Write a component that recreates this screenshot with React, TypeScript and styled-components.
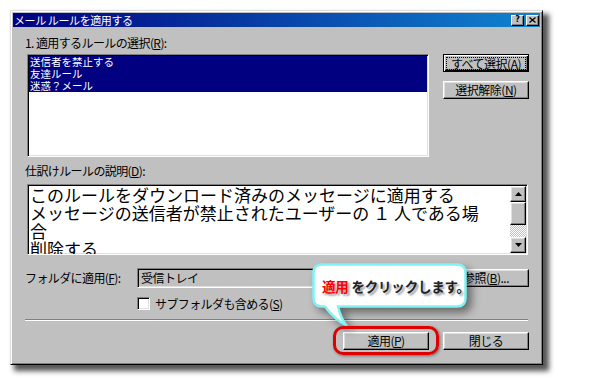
import React from "react";
import styled, { createGlobalStyle, css } from "styled-components";

const UI_FONT = `"Noto Sans CJK JP", "Noto Sans", sans-serif`;

const GlobalStyle = createGlobalStyle`
  html, body { margin: 0; padding: 0; background: #fff; }
  body { font-family: ${UI_FONT}; }
  #root { width: 600px; height: 384px; overflow: hidden; }
`;

const raised = css`
  border: 1px solid;
  border-color: #fff #000 #000 #fff;
  box-shadow: inset -1px -1px #808080, inset 1px 1px #dfdfdf;
`;

const sunken = css`
  border: 1px solid;
  border-color: #808080 #fff #fff #808080;
  box-shadow: inset 1px 1px #000, inset -1px -1px #dfdfdf;
`;

const Page = styled.div`
  width: 600px;
  height: 384px;
  padding: 10px;
  box-sizing: border-box;
  background: #fff;
`;

const Window = styled.div`
  position: relative;
  box-sizing: border-box;
  width: 533px;
  height: 355px;
  padding: 2px;
  background: #c0c0c0;
  border: 1px solid;
  border-color: #dfdfdf #000 #000 #dfdfdf;
  box-shadow: inset 1px 1px #fff, inset -1px -1px #808080,
    5px 5px 5px 1px rgba(30, 30, 30, 0.75);
  font-family: ${UI_FONT};
  color: #000;
`;

const TitleBar = styled.div`
  height: 14px;
  display: flex;
  align-items: center;
  background: linear-gradient(to right, #000080, #1084d0);
  padding: 0 1px 0 1px;
`;

const Title = styled.span`
  flex: 1;
  color: #fff;
  font-size: 11px;
  line-height: 14px;
  letter-spacing: -0.4px;
  white-space: nowrap;
`;

const CaptionButton = styled.span<{ $gap?: number }>`
  width: 13px;
  height: 11px;
  box-sizing: border-box;
  background: #c0c0c0;
  border: 1px solid;
  border-color: #fff #000 #000 #fff;
  box-shadow: inset -1px -1px #808080;
  display: flex;
  align-items: center;
  justify-content: center;
  margin-left: ${(p) => p.$gap ?? 0}px;
  font-family: "DejaVu Sans", sans-serif;
  font-size: 8px;
  font-weight: bold;
  line-height: 8px;
  color: #000;
`;

const Body = styled.div`
  padding: 9px 11px 0 12px;
  display: flex;
  flex-direction: column;
`;

const Label = styled.div<{ $top?: number }>`
  font-size: 12px;
  line-height: 14px;
  letter-spacing: -0.6px;
  white-space: nowrap;
  margin-top: ${(p) => p.$top ?? 0}px;
`;

const TopSection = styled.div`
  display: flex;
  gap: 14px;
`;

const LeftCol = styled.div`
  width: 404px;
  display: flex;
  flex-direction: column;
`;

const ListBox = styled.div`
  ${sunken};
  box-sizing: border-box;
  margin: 4px 0 0 2px;
  width: 402px;
  height: 103px;
  padding: 1px;
  background: #fff;
`;

const ListItem = styled.div<{ $selected?: boolean }>`
  height: 12px;
  font-size: 10.5px;
  line-height: 12px;
  padding-left: 1px;
  white-space: nowrap;
  background: ${(p) => (p.$selected ? "#000080" : "transparent")};
  color: ${(p) => (p.$selected ? "#fff" : "#000")};
`;

const RightCol = styled.div`
  display: flex;
  flex-direction: column;
  gap: 9px;
  padding-top: 18px;
`;

const PushButton = styled.div<{ $default?: boolean; $push?: boolean }>`
  ${raised};
  box-sizing: border-box;
  width: 86px;
  height: 18px;
  display: flex;
  align-items: center;
  justify-content: center;
  font-size: 12px;
  line-height: 14px;
  letter-spacing: -0.5px;
  white-space: nowrap;
  background: #c0c0c0;
  margin-left: ${(p) => (p.$push ? "auto" : "0")};
  ${(p) =>
    p.$default &&
    css`
      border-color: #000;
      box-shadow: inset 1px 1px #fff, inset -1px -1px #000,
        inset -2px -2px #808080;
    `}
`;

const FocusRect = styled.span`
  outline: 1px dotted #000;
  outline-offset: 0px;
  padding: 0 4px;
  line-height: 11px;
`;

const DescBox = styled.div`
  ${sunken};
  box-sizing: border-box;
  margin: 6px 0 0 2px;
  width: 501px;
  height: 71px;
  display: flex;
  background: #fff;
  overflow: hidden;
`;

const DescText = styled.div`
  flex: 1;
  padding: 1px 0 0 2px;
  font-size: 17px;
  line-height: 18px;
  white-space: pre;
  overflow: hidden;
`;

const ScrollBar = styled.div`
  width: 16px;
  display: flex;
  flex-direction: column;
  padding: 1px 1px 1px 0;
`;

const ScrollArrow = styled.div`
  ${raised};
  box-sizing: border-box;
  height: 16px;
  display: flex;
  align-items: center;
  justify-content: center;
  background: #c0c0c0;
`;

const ScrollThumb = styled.div`
  ${raised};
  box-sizing: border-box;
  height: 23px;
  background: #c0c0c0;
`;

const ScrollTrack = styled.div`
  flex: 1;
  background-image: repeating-conic-gradient(#fff 0 25%, #c0c0c0 0 50%);
  background-size: 2px 2px;
`;

const FolderRow = styled.div`
  margin-top: 13px;
  display: flex;
  align-items: center;
  height: 20px;
`;

const FolderLabel = styled.div`
  width: 112px;
  font-size: 12px;
  line-height: 14px;
  letter-spacing: -0.6px;
  white-space: nowrap;
`;

const Field = styled.div`
  ${sunken};
  box-sizing: border-box;
  width: 291px;
  height: 20px;
  padding: 1px 0 0 3px;
  font-size: 12px;
  line-height: 16px;
  letter-spacing: -0.5px;
  background: #c0c0c0;
`;

const CheckRow = styled.label`
  margin-top: 9px;
  padding-left: 112px;
  display: flex;
  align-items: center;
  gap: 5px;
  height: 13px;
`;

const CheckText = styled.span`
  font-size: 12px;
  line-height: 14px;
  letter-spacing: -0.6px;
  white-space: nowrap;
`;

const CheckBox = styled.span`
  ${sunken};
  box-sizing: border-box;
  width: 13px;
  height: 13px;
  background: #fff;
`;

const Separator = styled.div`
  margin-top: 9px;
  width: 503px;
  border-top: 1px solid #808080;
  border-bottom: 1px solid #fff;
`;

const ButtonRow = styled.div`
  margin-top: 11px;
  display: flex;
  justify-content: flex-end;
  gap: 14px;
`;

const Callout = styled.div`
  position: absolute;
  left: 301px;
  top: 252px;
  width: 160px;
  height: 70px;
`;

const CalloutShape = styled.svg`
  position: absolute;
  left: 0;
  top: 0;
  filter: drop-shadow(5px 5px 4px rgba(0, 0, 0, 0.45));
`;

const CalloutText = styled.div`
  position: relative;
  padding: 15px 0 0 10px;
  font-size: 13.5px;
  line-height: 16px;
  font-weight: bold;
  letter-spacing: -0.2px;
  color: #222;
  white-space: nowrap;
  text-shadow: 2px 2px 2px rgba(0, 0, 0, 0.4);
`;

const Hot = styled.span`
  color: #ff0000;
`;

const Ring = styled.div`
  position: absolute;
  left: 322px;
  top: 315px;
  width: 106px;
  height: 29px;
  box-sizing: border-box;
  border: 3px solid #e00000;
  border-radius: 10px;
  box-shadow: 1px 1px 3px rgba(0, 0, 0, 0.45);
`;

const Tri = ({ up }: { up?: boolean }) => (
  <svg width="7" height="4" viewBox="0 0 7 4">
    <path d={up ? "M3.5 0 L7 4 L0 4 Z" : "M0 0 L7 0 L3.5 4 Z"} fill="#000" />
  </svg>
);

export default function App() {
  return (
    <>
      <GlobalStyle />
      <Page>
        <Window>
          <TitleBar>
            <Title>メール ルールを適用する</Title>
            <CaptionButton>?</CaptionButton>
            <CaptionButton $gap={2}>
              <svg width="7" height="6" viewBox="0 0 7 6">
                <path d="M0.5 0.5 L6.5 5.5 M6.5 0.5 L0.5 5.5" stroke="#000" strokeWidth="1.3" />
              </svg>
            </CaptionButton>
          </TitleBar>
          <Body>
            <TopSection>
              <LeftCol>
                <Label>
                  1. 適用するルールの選択(<u>R</u>):
                </Label>
                <ListBox>
                  <ListItem $selected>送信者を禁止する</ListItem>
                  <ListItem $selected>友達ルール</ListItem>
                  <ListItem $selected>迷惑？メール</ListItem>
                </ListBox>
              </LeftCol>
              <RightCol>
                <PushButton $default>
                  <FocusRect>
                    すべて選択(<u>A</u>)
                  </FocusRect>
                </PushButton>
                <PushButton>
                  選択解除(<u>N</u>)
                </PushButton>
              </RightCol>
            </TopSection>
            <Label $top={7}>
              仕訳けルールの説明(<u>D</u>):
            </Label>
            <DescBox>
              <DescText>
                {"このルールをダウンロード済みのメッセージに適用する\nメッセージの送信者が禁止されたユーザーの １ 人である場\n合\n削除する"}
              </DescText>
              <ScrollBar>
                <ScrollArrow>
                  <Tri up />
                </ScrollArrow>
                <ScrollThumb />
                <ScrollTrack />
                <ScrollArrow>
                  <Tri />
                </ScrollArrow>
              </ScrollBar>
            </DescBox>
            <FolderRow>
              <FolderLabel>
                フォルダに適用(<u>F</u>):
              </FolderLabel>
              <Field>受信トレイ</Field>
              <PushButton $push>
                参照(<u>B</u>)...
              </PushButton>
            </FolderRow>
            <CheckRow>
              <CheckBox />
              <CheckText>
                サブフォルダも含める(<u>S</u>)
              </CheckText>
            </CheckRow>
            <Separator />
            <ButtonRow>
              <PushButton>
                適用(<u>P</u>)
              </PushButton>
              <PushButton>閉じる</PushButton>
            </ButtonRow>
          </Body>
          <Callout>
            <CalloutShape width="160" height="70" viewBox="0 0 160 70">
              <path
                d="M10 1.5 H145 Q153.5 1.5 153.5 10 V35 Q153.5 43.5 145 43.5 H26 Q29 56 35 63 Q22 56 13 43.5 H10 Q1.5 43.5 1.5 35 V10 Q1.5 1.5 10 1.5 Z"
                fill="#fff"
                stroke="#80f4f4"
                strokeWidth="2.5"
              />
            </CalloutShape>
            <CalloutText>
              <Hot>適用</Hot> をクリックします。
            </CalloutText>
          </Callout>
          <Ring />
        </Window>
      </Page>
    </>
  );
}
